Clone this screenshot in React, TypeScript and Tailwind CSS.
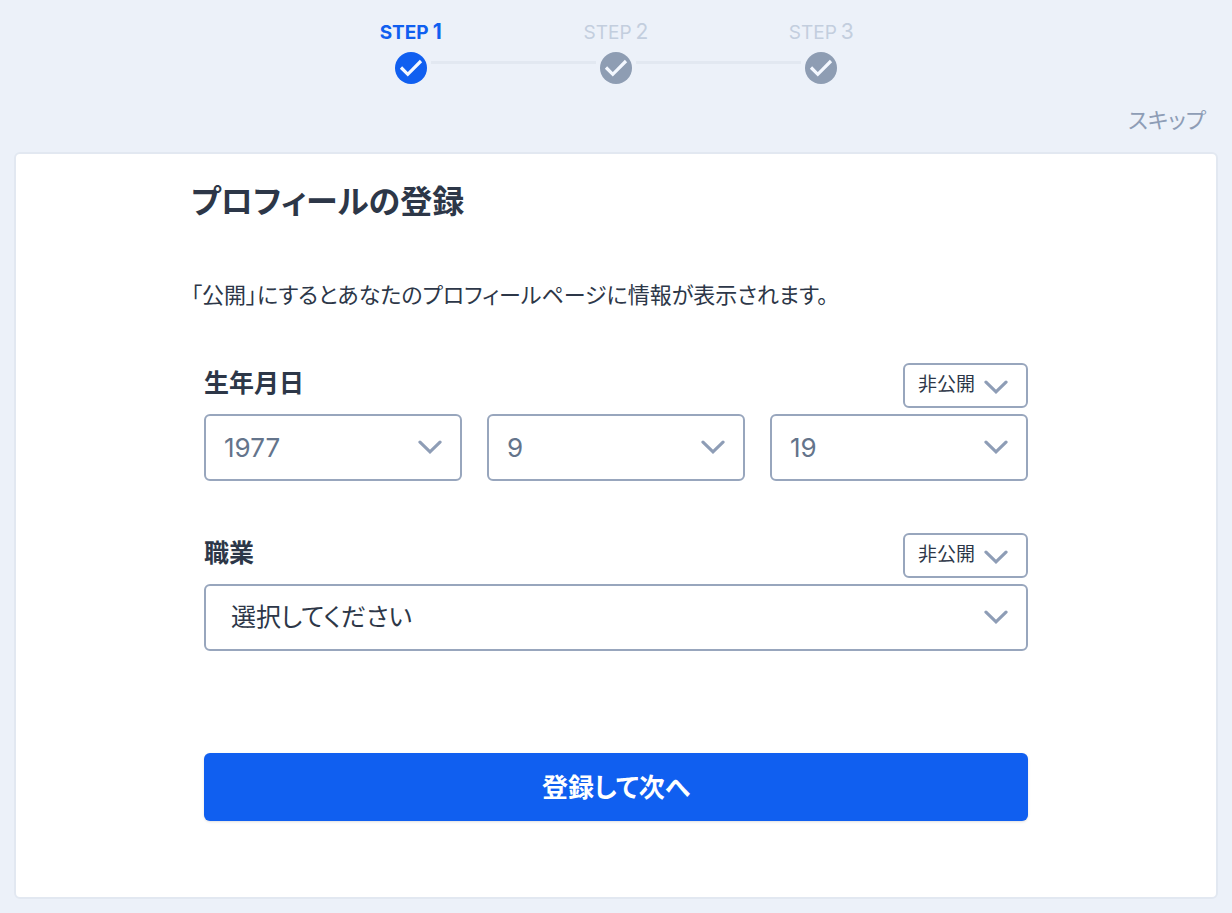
import { useId, type ReactNode } from "react";
import { clsx } from "clsx";

const steps = [
  { number: 1, active: true },
  { number: 2, active: false },
  { number: 3, active: false },
];

const years = Array.from({ length: 80 }, (_, i) => String(1940 + i));
const months = Array.from({ length: 12 }, (_, i) => String(i + 1));
const days = Array.from({ length: 31 }, (_, i) => String(i + 1));
const jobs = ["選択してください", "会社員", "自営業", "学生", "その他"];
const visibility = ["非公開", "公開"];

function Chevron({ className }: { className: string }) {
  return (
    <svg
      viewBox="0 0 24 14"
      aria-hidden="true"
      className={clsx("pointer-events-none absolute right-5 h-[14px] w-6 text-[#8e9db6]", className)}
    >
      <path d="M2 2.2 12 11.8 22 2.2" fill="none" stroke="currentColor" strokeWidth="3.2" strokeLinecap="round" />
    </svg>
  );
}

function Select({
  label,
  options,
  defaultValue,
  className,
}: {
  label: string;
  options: string[];
  defaultValue: string;
  className: string;
}) {
  return (
    <div className="relative">
      <select
        aria-label={label}
        defaultValue={defaultValue}
        className={clsx(
          "h-[67px] w-full appearance-none rounded-md border-2 border-[#98a6bd] bg-white pr-12",
          className,
        )}
      >
        {options.map((option) => (
          <option key={option}>{option}</option>
        ))}
      </select>
      <Chevron className="top-[26px]" />
    </div>
  );
}

function Field({ title, children }: { title: string; children: ReactNode }) {
  const titleId = useId();

  return (
    <div role="group" aria-labelledby={titleId} className="mt-[52px]">
      <div className="flex items-start justify-between">
        <span id={titleId} className="text-[25px] leading-10 font-bold">
          {title}
        </span>
        <div className="relative">
          <select
            aria-label={`${title}の公開設定`}
            defaultValue="非公開"
            className="h-[45px] w-[125px] appearance-none rounded-md border-2 border-[#98a6bd] bg-white pl-[13px] text-[19px]"
          >
            {visibility.map((option) => (
              <option key={option}>{option}</option>
            ))}
          </select>
          <Chevron className="top-[17px]" />
        </div>
      </div>
      <div className="mt-[6px]">{children}</div>
    </div>
  );
}

function Steps() {
  return (
    <ol className="mx-auto grid max-w-[616px] grid-cols-3">
      {steps.map((step, i) => (
        <li key={step.number}>
          <div
            className={clsx(
              "flex h-6 items-baseline justify-center gap-1 text-[19px] leading-6",
              step.active ? "font-bold text-[#105ff0]" : "text-[#c3cede]",
            )}
          >
            <span>STEP</span>
            <span className="text-[21px] leading-6">{step.number}</span>
          </div>
          <div className="mt-2 flex items-start gap-1">
            <div className={clsx("mt-[9px] h-[3px] flex-1", i > 0 && "bg-[#e2e8f1]")} />
            <svg
              viewBox="0 0 32 32"
              aria-hidden="true"
              className={clsx("size-8", step.active ? "text-[#105ff0]" : "text-[#8e9db3]")}
            >
              <circle cx="16" cy="16" r="16" fill="currentColor" />
              <path d="M6 15.5 12.8 22.3 26 9" fill="none" stroke="#f4f8ff" strokeWidth="3.2" />
            </svg>
            <div className={clsx("mt-[9px] h-[3px] flex-1", i < steps.length - 1 && "bg-[#e2e8f1]")} />
          </div>
        </li>
      ))}
    </ol>
  );
}

export default function App() {
  return (
    <div className="min-h-screen bg-[#ecf1f9] px-[14px] pt-5 pb-[14px] font-[Inter,'Noto_Sans_CJK_JP',sans-serif] text-[#2d3748] [font-feature-settings:'palt']">
      <header>
        <Steps />
        <div className="mt-5 flex justify-end pr-3">
          <a href="#skip" className="text-[22px] leading-8 text-[#8e9db6]">
            スキップ
          </a>
        </div>
      </header>

      <main className="mt-4 rounded-md border-2 border-[#e2e8f1] bg-white px-4 pt-7 pb-[76px]">
        <div className="mx-auto max-w-[850px]">
          <h1 className="text-[32px] leading-10 font-bold">プロフィールの登録</h1>
          <p className="mt-[57px] text-[22px] leading-8">
            「公開」にするとあなたのプロフィールページに情報が表示されます。
          </p>

          <form className="px-[13px]" onSubmit={(e) => e.preventDefault()}>
            <Field title="生年月日">
              <div className="grid grid-cols-3 gap-[25px]">
                <Select label="年" options={years} defaultValue="1977" className="pl-[18px] text-[26px] text-[#64748b]" />
                <Select label="月" options={months} defaultValue="9" className="pl-[18px] text-[26px] text-[#64748b]" />
                <Select label="日" options={days} defaultValue="19" className="pl-[18px] text-[26px] text-[#64748b]" />
              </div>
            </Field>
            <Field title="職業">
              <Select label="職業" options={jobs} defaultValue="選択してください" className="pl-[25px] text-[25px]" />
            </Field>
            <button
              type="submit"
              className="mt-[102px] h-[68px] w-full rounded-md bg-[#105ff0] text-[26px] font-bold text-white shadow-sm"
            >
              登録して次へ
            </button>
          </form>
        </div>
      </main>
    </div>
  );
}
